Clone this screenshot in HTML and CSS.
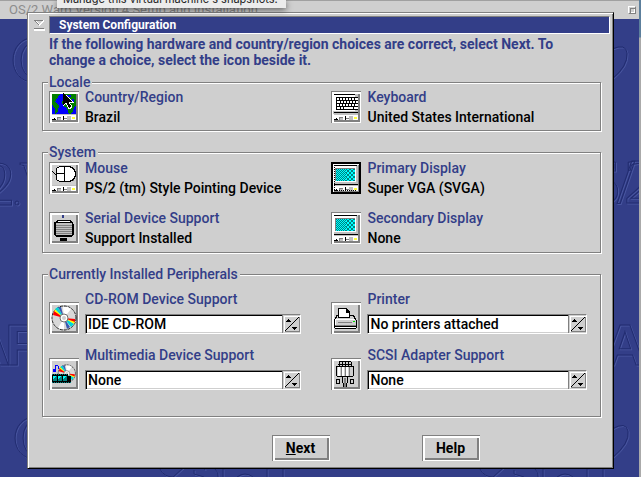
FILE: index.html
```html
<!DOCTYPE html>
<html lang="en">
<head>
<meta charset="utf-8">
<title>System Configuration</title>
<link rel="stylesheet" href="styles.css">
</head>
<body>
<svg class="wallpaper" aria-hidden="true">
  <g class="emboss">
    <ellipse cx="32" cy="60" rx="19" ry="22"/><ellipse cx="34" cy="60" rx="13" ry="18"/>
    <ellipse cx="34" cy="438" rx="19" ry="21"/><ellipse cx="35" cy="438" rx="12" ry="18"/>
    <path d="M612 49q14-6 15 4q1 13-15 26M612 429q14-8 16 2q2 12-16 27M160 469q4 8 13 8l10-9M194 470v4l10 3M205 470l-1-4M215 469q4 3 3 8M223 469v8M237 477q8-6 16 0M267 469v8M283 469v8M480 469q4 8 13 8l10-9M514 470v4l10 3M535 469q4 3 3 8M543 469v8M557 477q8-6 16 0M587 469v8M603 469v8"/>
    <circle cx="17" cy="203" r="2"/>
    <text class="serif" x="-17" y="205">2</text>
    <text class="serif" x="20" y="205">W</text>
    <text class="serif" x="586" y="203">S</text>
    <text class="serif" x="617" y="203">/</text>
    <text class="serif" x="624" y="203">2</text>
    <text class="sans" x="-32" y="365">A</text>
    <text class="sans" x="5" y="365">R</text>
    <text class="sans" x="604" y="365">A</text>
  </g>
</svg>

<header class="parent-bar">
  <span>OS/2 Warp Version 4 Setup and Installation</span>
  <button class="restore" aria-label="Restore"></button>
</header>
<div class="host-edge"></div>

<main class="dialog">
  <div class="title-row">
    <button class="sysmenu" aria-label="System menu">
      <svg width="11" height="11" shape-rendering="crispEdges"><path fill="#fff" d="M0 0h10v1L6 6H5L0 1zM0 9h11v2H0z"/><path fill="#cfcfcf" d="M2 1h6L5 4z"/><path fill="#808080" d="M0 0h9v1H0zM1 1h1v1h1v1h1v1h1v1H4V4H3V3H2V2H1zM0 8h10v1H0z"/></svg>
    </button>
    <h1>System Configuration</h1>
  </div>

  <p class="intro">If the following hardware and country/region choices are correct, select Next. To<br>change a choice, select the icon beside it.</p>

  <fieldset class="locale">
    <legend>Locale</legend>
    <div class="grid">
      <div class="item">
        <button class="icon" aria-label="Country/Region">
          <svg viewBox="0 0 30 32" shape-rendering="crispEdges">
            <path fill="#00f" d="M3 3h24v20H3z"/>
            <path fill="#008000" d="M3 3h8l-2 3-2 3-2 2 3 1 2 3-1 5-2 3H6v-5l-3-5zM14 3h13v12l-2 1-1 4-2 3h-2l-2-6-3-1-2-4 1-3z"/>
            <path fill="#00f" d="M17 4h5v2h-3zM23 8h2v3h-2z"/>
            <use href="#strip"/>
            <path fill="#000" stroke="#fff" d="M14 2v13l3-3 3 6 3-2-3-5h4z"/>
            <path fill="#000" d="M14 2v12l3-3 3 6 2-1-3-6h4z"/>
          </svg>
        </button>
        <div class="text"><h2>Country/Region</h2><p>Brazil</p></div>
      </div>
      <div class="item">
        <button class="icon" aria-label="Keyboard">
          <svg viewBox="0 0 30 32" shape-rendering="crispEdges">
            <path fill="#fff" d="M2 2h24v18H2z"/><path fill="#c0c0c0" d="M24 3h3v20H2v-3h22z"/>
            <path fill="#000" d="M3 3h21v1H3zM3 21h24v1H3zM5 6h22v13H5z"/>
            <path fill="#fff" d="M6 7h2v2H6zM9 7h2v2H9zM12 7h2v2h-2zM15 7h2v2h-2zM18 7h2v2h-2zM21 7h2v2h-2zM24 7h3v2h-3zM6 10h3v2H6zM10 10h2v2h-2zM13 10h2v2h-2zM16 10h2v2h-2zM19 10h2v2h-2zM22 10h2v2h-2zM25 10h2v2h-2zM6 13h2v2H6zM9 13h2v2H9zM12 13h2v2h-2zM15 13h2v2h-2zM18 13h2v2h-2zM21 13h2v2h-2zM24 13h3v2h-3zM6 16h3v2H6zM10 16h2v2h-2zM13 16h9v2h-9zM23 16h4v2h-4z"/>
            <use href="#strip"/>
          </svg>
        </button>
        <div class="text"><h2>Keyboard</h2><p>United States International</p></div>
      </div>
    </div>
  </fieldset>

  <fieldset class="system">
    <legend>System</legend>
    <div class="grid">
      <div class="item">
        <button class="icon" aria-label="Mouse">
          <svg viewBox="0 0 30 32" shape-rendering="crispEdges">
            <path fill="#808080" d="M10 19h12v1H10zM22 18h3v1h-3z"/>
            <path fill="#fff" stroke="#000" d="M7.500 6.500l3-2h10l4 2 2 4v3l-2 4-4 2h-10l-3-2z"/>
            <path fill="none" stroke="#000" d="M15.500 4v15M7 11.500h9M3 9l3 3h2"/>
            <use href="#strip"/>
          </svg>
        </button>
        <div class="text"><h2>Mouse</h2><p>PS/2 (tm) Style Pointing Device</p></div>
      </div>
      <div class="item">
        <button class="icon focused" aria-label="Primary Display">
          <svg viewBox="0 0 30 32" shape-rendering="crispEdges"><use href="#monitor"/>
            <path fill="none" stroke="#000" stroke-dasharray="1 1" d="M3 3.500h24M3.500 3v25M4 28.500h22"/>
            <path fill="none" stroke="#000" stroke-width="2" d="M1 1h28v30H1z"/></svg>
        </button>
        <div class="text"><h2>Primary Display</h2><p>Super VGA (SVGA)</p></div>
      </div>
      <div class="item">
        <button class="icon" aria-label="Serial Device Support">
          <svg viewBox="0 0 30 32" shape-rendering="crispEdges">
            <path fill="#333e88" d="M13 3h2v3h-2z"/>
            <path fill="#000" d="M7 9h16v1h1v2h1v11h-1v1h-1v1H7v-1H6v-1H5V10h2z"/>
            <path fill="#c0c0c0" d="M7 11h16v12H7z"/>
            <path fill="#000" d="M8 8h14v3H8z"/><path fill="#fff" d="M9 9h12v1H9z"/>
            <path fill="#808080" d="M7 13h16v1H7zM7 15h16v1H7zM7 17h16v1H7zM7 19h16v1H7zM7 21h16v1H7z"/>
            <path fill="#000" d="M11 26h7v3h-7z"/>
          </svg>
        </button>
        <div class="text"><h2>Serial Device Support</h2><p>Support Installed</p></div>
      </div>
      <div class="item">
        <button class="icon" aria-label="Secondary Display">
          <svg viewBox="0 0 30 32" shape-rendering="crispEdges">
            <defs>
              <pattern id="fine" width="2" height="2" patternUnits="userSpaceOnUse"><path fill="#0ff" d="M0 0h2v2H0z"/><path fill="#008080" d="M0 0h1v1H0zM1 1h1v1H1z"/></pattern>
              <pattern id="coarse" width="4" height="4" patternUnits="userSpaceOnUse"><path fill="#0ff" d="M0 0h4v4H0z"/><path fill="#008080" d="M0 0h2v2H0zM2 2h2v2H2z"/></pattern>
              <g id="strip">
                <path fill="#fff" d="M3 24h24v5H3z"/><path fill="#c0c0c0" d="M3 23h24v1H3zM9 27h3v2H9zM18 25h4v4h-4z"/>
                <path fill="#000" d="M5 27h1v1h1v1H3v-1h2zM14 25h1v4h-1z"/>
                <path fill="#808080" d="M8 26h4v1H8zM8 27h1v2H8zM15 27h3v1h-3zM3 29h24v1H3z"/><path fill="#ffff40" d="M23 26h3v2h-3z"/>
              </g>
              <g id="monitor">
                <path fill="#fff" d="M2 2h24v20H2z"/><path fill="#c0c0c0" d="M25 4h2v26h-2zM3 20h24v2H3z"/>
                <path fill="#000" d="M3 3h23v1H3zM3 22h24v1H3z"/>
                <path fill="#808080" d="M4 6h20v13H4z"/><path fill="#fff" d="M24 6h1v14H5v-1h19z"/>
                <path fill="url(#fine)" d="M5 7h10v12H5z"/><path fill="url(#coarse)" d="M15 7h9v12h-9z"/>
                <use href="#strip"/>
              </g>
              <g id="disc" shape-rendering="auto">
                <circle cx="15" cy="16" r="12" fill="#d8d8d8" stroke="#222" stroke-dasharray="3 1"/>
                <path fill="#fff" d="M15 16L14 5h5l3 2zM15 16L9 26l3 1h3z"/>
                <path fill="#ff0" d="M15 16L5 10l1-3zM15 16l10 6 1-3z"/>
                <path fill="red" d="M15 16L4 13l1-4zM15 16l11 1v3z"/>
                <path fill="#00d8d8" d="M15 16L6 7l3-2zM15 16l7 9 3-3z"/>
                <path fill="#3a5ab0" d="M15 16L9 5h3zM15 16l3 11 3-2z"/>
                <circle cx="15" cy="16" r="4" fill="#fff" stroke="#707070"/><circle cx="15" cy="16" r="2" fill="#cfcfcf"/>
              </g>
            </defs>
            <use href="#monitor"/>
          </svg>
        </button>
        <div class="text"><h2>Secondary Display</h2><p>None</p></div>
      </div>
    </div>
  </fieldset>

  <fieldset class="peripherals">
    <legend>Currently Installed Peripherals</legend>
    <div class="grid">
      <div class="item">
        <button class="icon" aria-label="CD-ROM setup"><svg viewBox="0 0 30 32"><use href="#disc"/></svg></button>
        <div class="field">
          <label for="cd">CD-ROM Device Support</label>
          <div class="spin"><input id="cd" value="IDE CD-ROM" readonly><button aria-label="Change CD-ROM"><svg width="16" height="16"><use href="#arrows"/></svg></button></div>
        </div>
      </div>
      <div class="item">
        <button class="icon" aria-label="Printer setup">
          <svg viewBox="0 0 30 32" shape-rendering="crispEdges">
            <path fill="#000" d="M5 13h18v1h1v2h1v2h1v8h-1v1H4v-1H3v-9h1v-2h1z"/>
            <path fill="#cfcfcf" d="M6 14h16v1h1v2h1v1h1v6H4v-6h1v-2h1z"/>
            <path fill="#fff" d="M4 17h20v1H4zM4 18h1v5H4z"/>
            <path fill="#000" d="M7 6h9v1h1v1h1v1h1v7H7z"/><path fill="#fff" d="M8 7h7v4h3v4H8z"/>
            <path fill="#808080" d="M7 20h14v1H7zM4 23h21v1H4z"/><path fill="#fff" d="M4 25h21v1H4z"/><path fill="#0d0" d="M22 19h2v1h-2z"/>
          </svg>
        </button>
        <div class="field">
          <label for="printer">Printer</label>
          <div class="spin"><input id="printer" value="No printers attached" readonly><button aria-label="Change printer"><svg width="16" height="16"><use href="#arrows"/></svg></button></div>
        </div>
      </div>
      <div class="item">
        <button class="icon" aria-label="Multimedia setup">
          <svg viewBox="0 0 30 32" shape-rendering="crispEdges">
            <use href="#disc" transform="translate(7 4) scale(.72)"/>
            <path fill="#00f" d="M6 7h1v6H6zM7 7h2v1H7zM9 8h1v3H9zM4 11h3v3H4z"/>
            <path fill="#000" d="M3 16h16v9H3zM19 18h3v7h-3z"/><path fill="#0ff" d="M4 18h4v5H4zM9 18h4v5H9zM14 18h4v5h-4z"/>
            <path fill="#008080" d="M4 21l4-3v5H4zM9 21l4-3v5H9zM14 21l4-3v5h-4z"/><path stroke="#008080" stroke-dasharray="1 1" d="M3 16.500h16M3 24.500h19"/>
          </svg>
        </button>
        <div class="field">
          <label for="mm">Multimedia Device Support</label>
          <div class="spin"><input id="mm" value="None" readonly><button aria-label="Change multimedia"><svg width="16" height="16"><use href="#arrows"/></svg></button></div>
        </div>
      </div>
      <div class="item">
        <button class="icon" aria-label="SCSI setup">
          <svg viewBox="0 0 30 32" shape-rendering="crispEdges">
            <path fill="#000" d="M8 3h12v1H8zM7 6h14v1H7zM8 4h1v4H8zM11 4h1v4h-1zM14 4h1v4h-1zM17 4h1v4h-1zM20 4h1v4h-1z"/>
            <path fill="#000" d="M5 8h18v10h-1v1H6v-1H5z"/><path fill="#cfcfcf" d="M6 9h16v9H6z"/><path fill="#fff" d="M7 9h2v9H7zM11 9h2v9h-2zM15 9h2v9h-2z"/><path fill="#808080" d="M10 9h1v9h-1zM14 9h1v9h-1zM18 9h1v9h-1z"/>
            <path fill="#000" d="M5 21h4v5H5zM19 21h4v5h-4zM11 19h1v6h-1zM16 19h1v6h-1zM12 25h1v4h-1zM15 25h1v4h-1z"/><path fill="#cfcfcf" d="M6 22h2v3H6zM20 22h2v3h-2z"/><path fill="#808080" d="M13 20h2v9h-2z"/>
          </svg>
        </button>
        <div class="field">
          <label for="scsi">SCSI Adapter Support</label>
          <div class="spin"><input id="scsi" value="None" readonly><button aria-label="Change SCSI adapter"><svg width="16" height="16" shape-rendering="crispEdges"><g id="arrows"><path fill="#fff" d="M0 0h16v1H0zM0 0h1v16H0z"/><path fill="#808080" d="M15 1h1v15H1v-1h14z"/><path stroke="#000" d="M1 15L15 1"/><path fill="#000" d="M4 3h1v1h1v1h1v1H2V5h1V4h1zM8 11h5v1h-1v1h-1v1h-1v-1H9v-1H8z"/></g></svg></button></div>
        </div>
      </div>
    </div>
  </fieldset>

  <div class="actions">
    <button class="push"><u>N</u>ext</button>
    <button class="push">Help</button>
  </div>
</main>

<div class="tip" role="tooltip">Manage this virtual machine's snapshots.</div>
</body>
</html>
```
FILE: styles.css
```css
* { box-sizing: border-box; }

body {
  margin: 0;
  min-height: 100vh;
  overflow: hidden;
  position: relative;
  background: #333e88;
  color: #000;
  font: 500 14px/20px Roboto, "Liberation Sans", sans-serif;
}

h1, h2, p { margin: 0; font-size: inherit; font-weight: inherit; }

button { margin: 0; padding: 0; border: 0; background: none; font: inherit; color: inherit; }

svg { display: block; }

.wallpaper { position: absolute; inset: 0; width: 100%; height: 100%; }
.emboss { fill: none; stroke: #222c70; filter: drop-shadow(1px 1px 0 #4956a0); }
.serif { font: 64px "Liberation Serif", serif; }
.sans { font: bold 58px "Liberation Sans", sans-serif; }

.parent-bar {
  position: relative;
  display: flex;
  justify-content: space-between;
  align-items: center;
  height: 19px;
  padding: 0 5px 0 9px;
  border-top: 1px solid #a0a0a0;
  background: #cfcfcf;
  color: #8c8c8c;
  font-size: 13px;
  font-weight: 400;
}

.restore { width: 8px; height: 8px; border: 1px solid; border-color: #fff #808080 #808080 #fff; box-shadow: inset 1px 1px #cfcfcf, inset 2px 2px #808080, inset -1px -1px #fff; }

.host-edge { position: absolute; top: 0; right: 0; bottom: 0; width: 2px; background: linear-gradient(#5c7f9c 37px, #aaa 38px); }

.dialog {
  position: absolute;
  top: 12px;
  left: 27px;
  right: 27px;
  padding: 3px 2px 7px 6px;
  border: 1px solid;
  border-color: #808080 #000 #000 #808080;
  box-shadow: inset 1px 1px #fff, inset -1px -1px #808080;
  background: #cfcfcf;
}

.title-row { display: flex; align-items: center; gap: 4px; }
.sysmenu { width: 11px; }
h1 {
  flex: 1;
  height: 18px;
  margin-right: 1px;
  padding-left: 9px;
  border: 1px solid;
  border-color: #808080 #fff #fff #808080;
  background: #333e88;
  color: #fff;
  font-size: 12px;
  font-weight: 700;
  line-height: 16px;
}

.intro { padding: 2px 0 0 15px; line-height: 16px; font-weight: 700; color: #333e88; white-space: nowrap; }

fieldset {
  min-width: 0;
  margin: 0 10px 0 8px;
  padding: 0 13px 0 6px;
  border: 1px solid #808080;
  box-shadow: inset 1px 1px #fff, 1px 1px #fff;
}
legend { padding: 0 2px 0 1px; margin-left: -1px; line-height: 18px; background: #cfcfcf; color: #333e88; }

.locale { margin-top: 5px; height: 58px; }
.system { margin-top: 12px; height: 110px; }
.peripherals { margin-top: 12px; height: 152px; }

.grid { display: grid; grid-template-columns: 252fr 255fr; column-gap: 30px; row-gap: 18px; }
.item { display: flex; gap: 6px; align-items: flex-start; min-width: 0; }
.text { margin: -4px 0; white-space: nowrap; }
.system .grid { padding-top: 1px; }
h2, label { color: #333e88; }

.icon {
  flex: none;
  width: 30px;
  height: 32px;
  background: #cfcfcf;
  box-shadow: inset 1px 1px #808080, inset -1px -1px #fff, inset 3px 3px #fff, inset -3px -3px #808080;
}
.icon svg { width: 30px; height: 32px; }

.peripherals .grid { row-gap: 11px; padding-top: 6px; }
.peripherals .item { align-items: flex-end; }
.field { flex: 1; min-width: 0; }
label { display: block; margin-bottom: 5px; line-height: 20px; }

.spin {
  display: flex;
  height: 20px;
  border: 1px solid;
  border-color: #808080 #fff #fff #808080;
  background: #fff;
  box-shadow: inset 1px 1px #000, inset -1px -1px #cfcfcf;
}
.spin input { flex: 1; width: 0; min-width: 0; padding: 0 0 0 2px; border: 0; background: none; font: inherit; color: #000; outline: 0; }
.spin button { width: 18px; padding: 1px; border-left: 1px solid #808080; background: #cfcfcf; }

.actions { display: flex; justify-content: center; gap: 92px; padding: 18px 0 0 106px; }
.push {
  width: 58px;
  height: 26px;
  font-weight: 700;
  box-shadow: inset 1px 1px #808080, inset -1px -1px #fff, inset 3px 3px #fff, inset -3px -3px #808080;
}

.tip {
  position: absolute;
  top: 0;
  left: 57px;
  display: flex;
  align-items: flex-end;
  height: 8px;
  padding: 0 8px 0 6px;
  background: #ececec;
  box-shadow: 0 2px 6px #0008;
  color: #222;
  font: 11px/18px Inter, sans-serif;
  clip-path: inset(0 -8px -10px);
}
```
